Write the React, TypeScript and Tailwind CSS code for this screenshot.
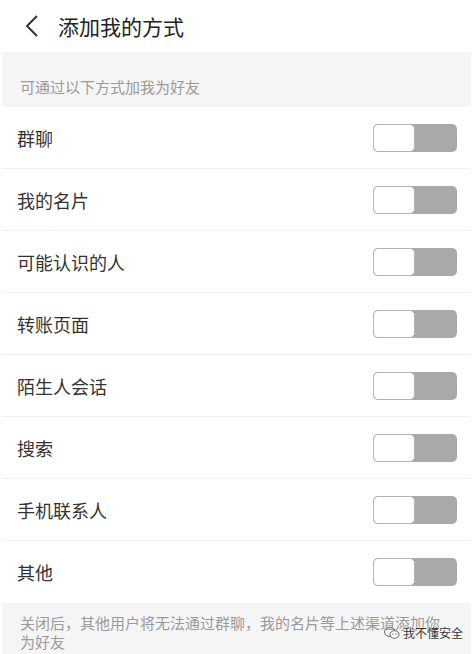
import React from 'react';

const items = ['群聊', '我的名片', '可能认识的人', '转账页面', '陌生人会话', '搜索', '手机联系人', '其他'];

const font = { fontFamily: '"Noto Sans CJK SC", "Liberation Sans", sans-serif' };

function Toggle() {
  return (
    <div className="w-[84px] h-[28px] rounded-[5px] bg-[#a9a9a9] flex">
      <div className="w-[42px] h-[28px] rounded-[5px] bg-white border border-[#b4b4b4]" />
    </div>
  );
}

export default function App() {
  return (
    <div className="w-[474px] h-[654px] bg-white overflow-hidden relative" style={font}>
      <div className="mx-[2px] mr-[3px] flex flex-col">
        {/* Header */}
        <div className="h-[52px] flex items-center">
          <svg width="14" height="22" viewBox="0 0 14 22" className="ml-[23px]">
            <path d="M12 1 L2 11 L12 21" fill="none" stroke="#333" strokeWidth="2" />
          </svg>
          <span className="ml-[19px] text-[21px] text-[#222] leading-none">添加我的方式</span>
        </div>

        {/* Section hint */}
        <div className="h-[55px] bg-[#f5f5f5] flex items-end pb-[13px]">
          <span className="ml-[18px] text-[15px] text-[#9a9a9a] leading-none">可通过以下方式加我为好友</span>
        </div>

        {/* Rows */}
        {items.map((label, i) => (
          <div
            key={label}
            className={`h-[62px] flex items-center justify-between pl-[15px] pr-[14px] ${i < items.length - 1 ? 'border-b border-[#f0f0f0]' : ''}`}
          >
            <span className="text-[18px] text-[#333] leading-none">{label}</span>
            <Toggle />
          </div>
        ))}

        {/* Footer */}
        <div className="h-[60px] bg-[#f5f5f5] pl-[18px] pr-[22px] pt-[10px]">
          <p className="text-[15px] leading-[19px] text-[#9a9a9a]">
            关闭后，其他用户将无法通过群聊，我的名片等上述渠道添加你为好友
          </p>
        </div>
      </div>

      {/* Watermark */}
      <div className="absolute left-[384px] top-[626px] flex items-center gap-[3px]">
        <svg width="16" height="14" viewBox="0 0 16 14">
          <ellipse cx="6" cy="6" rx="5.5" ry="4.5" fill="none" stroke="#666" strokeWidth="1" />
          <ellipse cx="10.5" cy="8.5" rx="4.5" ry="3.8" fill="white" stroke="#666" strokeWidth="1" />
          <circle cx="9" cy="8" r="0.7" fill="#666" />
          <circle cx="12" cy="8" r="0.7" fill="#666" />
        </svg>
        <span
          className="text-[12px] leading-none text-[#333]"
          style={{ textShadow: '0 0 2px #fff, 0 0 2px #fff' }}
        >
          我不懂安全
        </span>
      </div>
    </div>
  );
}
